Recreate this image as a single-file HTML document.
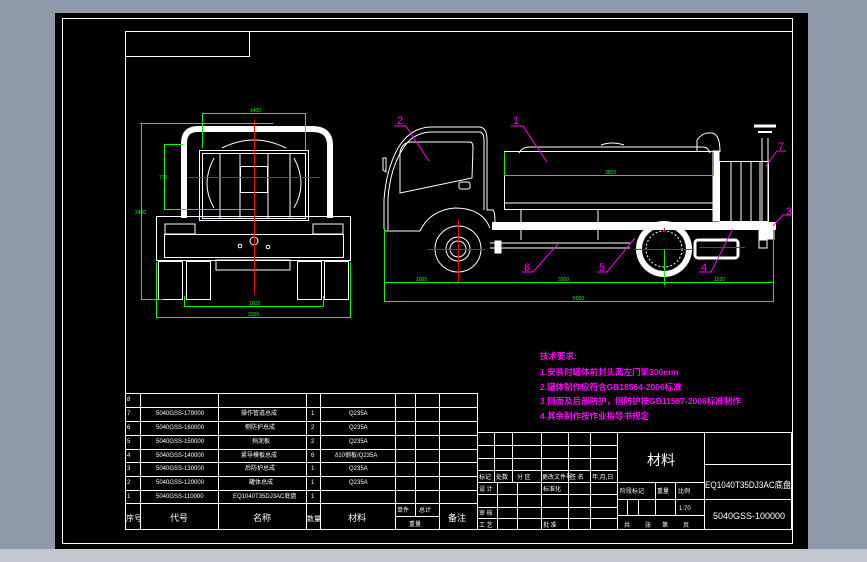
<!DOCTYPE html>
<html><head><meta charset="utf-8"><style>
html,body{margin:0;padding:0;width:867px;height:562px;overflow:hidden;background:#8e9aab}
svg{display:block}
text{font-family:"Liberation Sans","Noto Sans CJK SC",sans-serif}
</style></head><body>
<svg width="867" height="562" viewBox="0 0 867 562" xmlns="http://www.w3.org/2000/svg">
<rect x="0" y="0" width="867" height="562" fill="#8e9aab"/>
<rect x="0" y="549" width="867" height="13" fill="#c3c6ce"/>
<rect x="55" y="13" width="753" height="536" fill="#000"/>
<g fill="none" stroke="#fff" stroke-width="1">
<rect x="62.5" y="18.5" width="730" height="525"/>
<polyline points="125.5,530 125.5,31.5 792,31.5"/>
<rect x="125.5" y="31.5" width="124" height="25"/>
</g>

<!-- FRONT VIEW -->
<g fill="none" stroke="#fff" stroke-width="1">
<path d="M184,218 V143 Q184,129 198,129 H312 Q330,129 330,145 V218" stroke-width="6"/>
<rect x="199.5" y="150.5" width="109" height="70"/>
<rect x="202.5" y="153.5" width="103" height="65"/>
<path d="M214,158 Q200,184 214,208 M294,158 Q308,184 294,208"/>
<line x1="220" y1="153" x2="220" y2="218"/><line x1="290" y1="153" x2="290" y2="218"/>
<line x1="240" y1="153" x2="240" y2="218"/><line x1="268" y1="153" x2="268" y2="218"/>
<rect x="240.5" y="166.5" width="27" height="26"/>
<path d="M222,148 Q254,132 286,148"/>
<rect x="156.5" y="216.5" width="194" height="44"/>
<rect x="164.5" y="234.5" width="179" height="23"/>
<rect x="165" y="224" width="30" height="10"/><rect x="313" y="224" width="30" height="10"/>
<circle cx="254" cy="241" r="4"/><circle cx="240" cy="246" r="1.8"/><circle cx="268" cy="247" r="1.8"/>
<rect x="158.5" y="261.5" width="24" height="38"/><rect x="186.5" y="261.5" width="24" height="38"/>
<rect x="297.5" y="261.5" width="24" height="38"/><rect x="324.5" y="261.5" width="24" height="38"/>
<rect x="216" y="260" width="74" height="10"/>
</g>
<g stroke="#f00" stroke-width="1">
<line x1="254.5" y1="120" x2="254.5" y2="294"/>
<line x1="188" y1="177.5" x2="320" y2="177.5"/>
</g>
<g stroke="#0f0" stroke-width="1" fill="none">
<polyline points="202.5,148 202.5,113.5 305.5,113.5 305.5,150"/>
<polyline points="142,123.5 141.5,123.5 141.5,299.5 163,299.5"/>
<line x1="140" y1="123.5" x2="273" y2="123.5"/>
<polyline points="183,144.5 164.5,144.5 164.5,209.5 255,209.5"/>
<polyline points="184.5,296 184.5,306.5 323.5,306.5 323.5,296"/>
<polyline points="156.5,262 156.5,317.5 350.5,317.5 350.5,262"/>
</g>
<g fill="#0f0" font-size="5">
<text x="250" y="112">1400</text><text x="135" y="214">2400</text><text x="159" y="179">770</text>
<text x="249" y="305">1605</text><text x="248" y="316">2000</text>
</g>

<!-- SIDE VIEW -->
<g fill="none" stroke="#fff" stroke-width="1">
<path d="M384,229 V200 Q386,170 398,148 Q410,128 430,127 H480 Q487,128 487,140 V210 H493 Q495,212 495,222"/>
<path d="M388,230 V198 Q390,170 402,150 Q412,133 430,132 H480 Q484,133 484,140 V210"/>
<path d="M400,193 L400,152 Q402,143 410,142 H470 Q473,142 473,148 L472,178 Z"/>
<rect x="459" y="182" width="11" height="7" rx="2"/>
<path d="M383,170 V158 H386 V172 Z"/>
<path d="M384,231 H420 Q430,210 455,208 Q482,208 490,228"/>
<circle cx="458" cy="249" r="23"/><circle cx="458" cy="249" r="12"/><circle cx="458" cy="249" r="8"/>
<rect x="504.5" y="151.5" width="209" height="58"/>
<line x1="504" y1="203" x2="713" y2="203"/>
<path d="M519,153 Q522,147 530,147 H703 Q708,147 710,153"/>
<path d="M601,145 Q612,141 624,145"/>
<line x1="521" y1="210" x2="521" y2="240"/><line x1="598" y1="210" x2="598" y2="240"/>
<path d="M697,152 V140 Q703,132 710,133 Q720,132 720,152"/>
<rect x="713" y="151" width="6" height="70" fill="#fff"/>
<rect x="719.5" y="161.5" width="49" height="60"/>
<line x1="731" y1="161" x2="731" y2="221"/><line x1="741" y1="161" x2="741" y2="221"/><line x1="751" y1="161" x2="751" y2="221"/><line x1="760" y1="161" x2="760" y2="221"/>
<line x1="762" y1="138" x2="762" y2="222"/><line x1="768" y1="138" x2="768" y2="222"/>
<line x1="754" y1="126" x2="776" y2="126" stroke-width="3"/><line x1="758" y1="132" x2="772" y2="132" stroke-width="2"/>
<rect x="492" y="222" width="284" height="8" fill="#fff" stroke="none"/>
<line x1="490" y1="243" x2="630" y2="243"/><line x1="490" y1="248" x2="630" y2="248"/>
<rect x="495" y="241" width="6" height="12" fill="#fff"/>
<circle cx="664" cy="249" r="25" stroke-width="6"/>
<circle cx="664" cy="249" r="18" stroke-dasharray="2,2"/>
<rect x="695" y="240" width="43" height="18" rx="3" stroke-width="3"/>
<rect x="759" y="225" width="15" height="14" fill="#fff"/>
<rect x="759" y="240" width="8" height="8"/>
</g>
<g stroke="#f00" stroke-width="1">
<line x1="458.5" y1="220" x2="458.5" y2="283"/><line x1="428" y1="249.5" x2="485" y2="249.5"/>
<line x1="634" y1="249.5" x2="694" y2="249.5"/><line x1="664.5" y1="228" x2="664.5" y2="232"/>
<line x1="700" y1="247.5" x2="745" y2="247.5"/>
</g>
<g stroke="#0f0" stroke-width="1" fill="none">
<polyline points="504.5,152 504.5,175.5 713.5,175.5 713.5,152"/>
<line x1="664.5" y1="250" x2="664.5" y2="285"/>
<polyline points="384.5,228 384.5,302 "/>
<polyline points="773.5,230 773.5,302"/>
<line x1="384" y1="282.5" x2="774" y2="282.5"/>
<line x1="384" y1="301.5" x2="774" y2="301.5"/>
</g>
<g fill="#0f0" font-size="5">
<text x="605" y="174">3800</text><text x="416" y="281">1005</text><text x="558" y="281">3300</text>
<text x="714" y="281">1520</text><text x="573" y="300">5900</text>
</g>
<g stroke="#f0f" stroke-width="1" fill="none">
<polyline points="394,126 406,126 429,161"/><polyline points="511,126 523,126 547,162"/>
<polyline points="522,272 533,272 558,244"/><polyline points="597,272 607,272 635,238"/>
<polyline points="699,272 711,272 733,229"/><polyline points="777,151 786,151"/><line x1="777" y1="151" x2="766" y2="166"/>
<polyline points="773,226 783,215 791,215"/>
</g>
<g fill="#f0f" font-size="11">
<text x="397" y="124">2</text><text x="513" y="124">1</text><text x="524" y="271">6</text>
<text x="599" y="271">5</text><text x="701" y="271">4</text><text x="786" y="215">3</text><text x="778" y="150">7</text>
</g>

<!-- TECH NOTES -->
<g fill="#f0f" font-size="8.5" font-weight="bold">
<text x="540" y="359">技术要求:</text>
<text x="540" y="375">1.安装时罐体前封头离左门架300mm</text>
<text x="540" y="390">2.罐体制作应符合GB18564-2006标准</text>
<text x="540" y="404">3.侧面及后部防护，侧防护按GB11567-2006标准制作</text>
<text x="540" y="419">4.其余制作按作业指导书规定</text>
</g>

<!-- PARTS TABLE -->
<g stroke="#fff" stroke-width="1" fill="none">
<rect x="125.5" y="393.5" width="352" height="136"/>
<line x1="125" y1="407.5" x2="477" y2="407.5"/><line x1="125" y1="421.5" x2="477" y2="421.5"/>
<line x1="125" y1="435.5" x2="477" y2="435.5"/><line x1="125" y1="449.5" x2="477" y2="449.5"/>
<line x1="125" y1="462.5" x2="477" y2="462.5"/><line x1="125" y1="476.5" x2="477" y2="476.5"/>
<line x1="125" y1="490.5" x2="477" y2="490.5"/><line x1="125" y1="503.5" x2="477" y2="503.5"/>
<line x1="395" y1="516.5" x2="439" y2="516.5"/>
<line x1="140.5" y1="393" x2="140.5" y2="530"/><line x1="218.5" y1="393" x2="218.5" y2="530"/>
<line x1="306.5" y1="393" x2="306.5" y2="530"/><line x1="320.5" y1="393" x2="320.5" y2="530"/>
<line x1="395.5" y1="393" x2="395.5" y2="530"/><line x1="415.5" y1="393" x2="415.5" y2="516"/>
<line x1="439.5" y1="393" x2="439.5" y2="530"/>
</g>
<g fill="#fff" font-size="6">
<text x="127" y="401">8</text><text x="127" y="415">7</text><text x="127" y="429">6</text><text x="127" y="443">5</text>
<text x="127" y="457">4</text><text x="127" y="470">3</text><text x="127" y="484">2</text><text x="127" y="498">1</text>
<text x="156" y="415">5040GSS-170000</text><text x="156" y="429">5040GSS-160000</text><text x="156" y="443">5040GSS-150000</text>
<text x="156" y="457">5040GSS-140000</text><text x="156" y="470">5040GSS-130000</text><text x="156" y="484">5040GSS-120000</text>
<text x="156" y="498">5040GSS-110000</text>
<text x="241" y="415">操作管道总成</text><text x="245" y="429">侧防护总成</text><text x="252" y="443">挡泥板</text>
<text x="241" y="457">紧导模板总成</text><text x="245" y="470">后防护总成</text><text x="249" y="484">罐体总成</text>
<text x="233" y="498">EQ1040T35DJ3AC底盘</text>
<text x="311" y="415">1</text><text x="311" y="429">2</text><text x="311" y="443">2</text><text x="311" y="457">6</text>
<text x="311" y="470">1</text><text x="311" y="484">1</text><text x="311" y="498">1</text>
<text x="349" y="415">Q235A</text><text x="349" y="429">Q235A</text><text x="349" y="443">Q235A</text>
<text x="335" y="457">δ10钢板/Q235A</text><text x="349" y="470">Q235A</text><text x="349" y="484">Q235A</text>
<text x="397" y="512">单件</text><text x="419" y="512">总计</text><text x="409" y="526">重量</text>
</g>
<g fill="#fff" font-size="9">
<text x="126" y="521" font-size="8">序号</text><text x="170" y="521">代号</text><text x="253" y="521">名称</text>
<text x="307" y="521" font-size="7">数量</text><text x="348" y="521">材料</text><text x="448" y="521">备注</text>
</g>

<!-- TITLE BLOCK -->
<g stroke="#fff" stroke-width="1" fill="none">
<rect x="477.5" y="432.5" width="314" height="97"/>
<line x1="477" y1="445.5" x2="617" y2="445.5"/><line x1="477" y1="458.5" x2="617" y2="458.5"/>
<line x1="477" y1="470.5" x2="617" y2="470.5"/><line x1="477" y1="482.5" x2="704" y2="482.5"/>
<line x1="477" y1="494.5" x2="617" y2="494.5"/><line x1="477" y1="507.5" x2="617" y2="507.5"/>
<line x1="477" y1="518.5" x2="617" y2="518.5"/>
<line x1="494.5" y1="432" x2="494.5" y2="482"/><line x1="512.5" y1="432" x2="512.5" y2="482"/>
<line x1="541.5" y1="432" x2="541.5" y2="530"/><line x1="568.5" y1="432" x2="568.5" y2="482"/>
<line x1="590.5" y1="432" x2="590.5" y2="482"/><line x1="617.5" y1="432" x2="617.5" y2="530"/>
<line x1="497.5" y1="482" x2="497.5" y2="530"/><line x1="517.5" y1="482" x2="517.5" y2="530"/>
<line x1="568.5" y1="482" x2="568.5" y2="530"/><line x1="590.5" y1="482" x2="590.5" y2="530"/>
<line x1="704.5" y1="432" x2="704.5" y2="530"/>
<line x1="704" y1="464.5" x2="792" y2="464.5"/><line x1="704" y1="499.5" x2="792" y2="499.5"/>
<line x1="617" y1="499.5" x2="704" y2="499.5"/><line x1="617" y1="515.5" x2="704" y2="515.5"/>
<line x1="655.5" y1="482" x2="655.5" y2="515"/><line x1="675.5" y1="482" x2="675.5" y2="515"/>
<line x1="627.5" y1="499" x2="627.5" y2="515"/><line x1="638.5" y1="499" x2="638.5" y2="515"/>
</g>
<g fill="#fff" font-size="6">
<text x="479" y="479">标记</text><text x="496" y="479">处数</text><text x="517" y="479">分 区</text>
<text x="542" y="479">更改文件号</text><text x="570" y="479">签 名</text><text x="592" y="479">年,月,日</text>
<text x="479" y="491">设 计</text><text x="543" y="491">标准化</text>
<text x="479" y="515">审 核</text><text x="479" y="527">工 艺</text><text x="543" y="527">批 准</text>
<text x="620" y="493">阶段标记</text><text x="657" y="493">重量</text><text x="678" y="493">比例</text>
<text x="679" y="510">1:70</text>
<text x="624" y="527">共</text><text x="645" y="527">张</text><text x="662" y="527">第</text><text x="683" y="527">页</text>
</g>
<text x="647" y="465" fill="#fff" font-size="14">材料</text>
<text x="705" y="488" fill="#fff" font-size="9" textLength="86" lengthAdjust="spacingAndGlyphs">EQ1040T35DJ3AC底盘</text>
<text x="713" y="519" fill="#fff" font-size="9">5040GSS-100000</text>
</svg>
</body></html>
